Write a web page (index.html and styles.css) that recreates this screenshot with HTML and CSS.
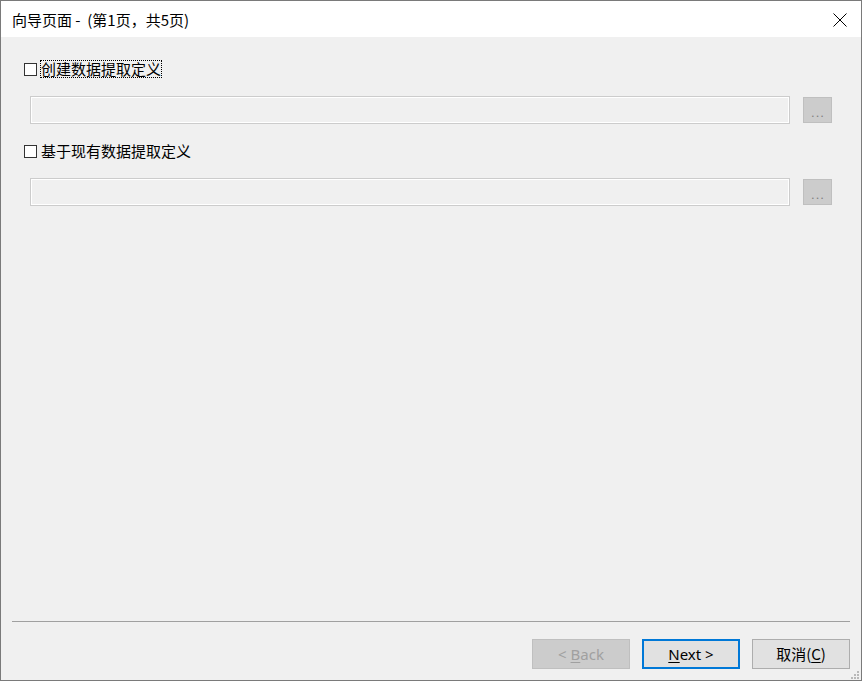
FILE: index.html
```html
<!DOCTYPE html>
<html lang="zh">
<head>
<meta charset="utf-8">
<title>向导页面</title>
<link rel="stylesheet" href="styles.css">
</head>
<body>
<div class="window">
  <div class="titlebar">
    <span class="title">向导页面&nbsp;-&nbsp;&nbsp;(第1页，共5页)</span>
    <svg class="close" width="14" height="14" viewBox="0 0 14 14"><path d="M0.5 0.5 L13.5 13.5 M13.5 0.5 L0.5 13.5" stroke="#000" stroke-width="1" fill="none"/></svg>
  </div>
  <div class="content">
    <label class="check-row">
      <span class="box"></span>
      <span class="label focus">创建数据提取定义</span>
    </label>
    <div class="field-row">
      <div class="textbox"></div>
      <div class="browse"><span class="dots">...</span></div>
    </div>
    <label class="check-row">
      <span class="box"></span>
      <span class="label">基于现有数据提取定义</span>
    </label>
    <div class="field-row">
      <div class="textbox"></div>
      <div class="browse"><span class="dots">...</span></div>
    </div>
  </div>
  <div class="footer">
    <div class="separator"></div>
    <div class="buttons">
      <div class="btn disabled">&lt;&nbsp;<u>B</u>ack</div>
      <div class="btn default"><u>N</u>ext&nbsp;&gt;</div>
      <div class="btn cjk">取消(<u>C</u>)</div>
    </div>
    <svg class="grip" width="8" height="8" viewBox="0 0 8 8">
      <rect x="6" y="0" width="2" height="2" fill="#b8b8b8"/>
      <rect x="3" y="3" width="2" height="2" fill="#b8b8b8"/>
      <rect x="6" y="3" width="2" height="2" fill="#b8b8b8"/>
      <rect x="0" y="6" width="2" height="2" fill="#b8b8b8"/>
      <rect x="3" y="6" width="2" height="2" fill="#b8b8b8"/>
      <rect x="6" y="6" width="2" height="2" fill="#b8b8b8"/>
    </svg>
  </div>
</div>
</body>
</html>
```
FILE: styles.css
```css
* { box-sizing: border-box; }
html, body {
  margin: 0;
  padding: 0;
  width: 862px;
  height: 681px;
  overflow: hidden;
  background: #f0f0f0;
}
.window {
  width: 862px;
  height: 681px;
  border: 1px solid #7a7a7a;
  display: flex;
  flex-direction: column;
  background: #f0f0f0;
  font-family: "Noto Sans CJK SC", "Noto Sans", sans-serif;
  color: #000;
}
.titlebar {
  height: 36px;
  background: #fff;
  display: flex;
  align-items: center;
  justify-content: space-between;
  padding: 0 14px 0 11px;
  flex: none;
}
.title {
  font-size: 15px;
  line-height: 20px;
  margin-top: 1px;
}
.close { display: block; margin-top: 1px; }
.content {
  flex: 1;
  padding: 23px 29px 0 23px;
  display: flex;
  flex-direction: column;
}
.check-row {
  display: flex;
  align-items: center;
  height: 18px;
}
.box {
  width: 13px;
  height: 13px;
  border: 1px solid #333;
  background: #fff;
  flex: none;
  margin-right: 3px;
}
.label {
  font-size: 15px;
  line-height: 16px;
  padding: 0;
  border: 1px dotted transparent;
}
.label.focus { border-color: #000; }
.field-row {
  display: flex;
  align-items: center;
  margin: 18px 0 18px 6px;
  gap: 13px;
}
.textbox {
  width: 760px;
  height: 28px;
  border: 1px solid #cccccc;
  box-shadow: inset 0 0 0 1px #fff;
  background: #f0f0f0;
}
.browse {
  width: 29px;
  height: 26px;
  background: #cccccc;
  border: 1px solid #bfbfbf;
  display: flex;
  justify-content: center;
  align-items: flex-end;
}
.dots {
  font-family: "Liberation Sans", sans-serif;
  font-size: 13px;
  line-height: 12px;
  color: #7f7f7f;
  letter-spacing: 1px;
  margin-bottom: 3px;
  margin-left: 1px;
}
.footer {
  flex: none;
  height: 59px;
  position: relative;
  padding: 0 11px 0 11px;
}
.separator {
  height: 1px;
  background: #a0a0a0;
  margin: 0 0 17px 0;
}
.buttons {
  display: flex;
  justify-content: flex-end;
  gap: 12px;
}
.btn {
  width: 98px;
  height: 30px;
  border: 1px solid #adadad;
  background: #e1e1e1;
  font-family: "Noto Sans", "Noto Sans CJK SC", sans-serif;
  font-size: 15px;
  display: flex;
  align-items: center;
  justify-content: center;
  line-height: 18px;
}
.btn.disabled {
  background: #cccccc;
  border-color: #bfbfbf;
  color: #a0a0a0;
}
.btn.default {
  border: 2px solid #0078d7;
}
.btn.cjk {
  font-family: "Noto Sans CJK SC", sans-serif;
}
.btn u { text-underline-offset: 2px; }
.grip {
  position: absolute;
  right: 2px;
  bottom: 1px;
}
```
